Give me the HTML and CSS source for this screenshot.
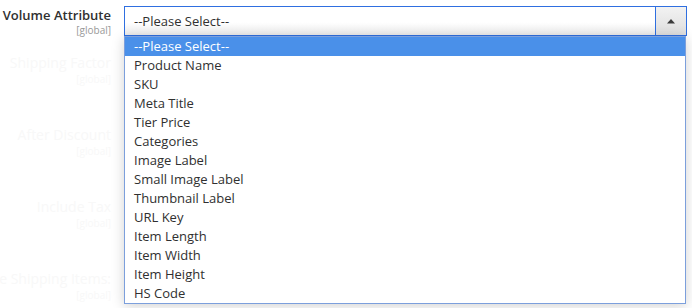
FILE: index.html
```html
<!DOCTYPE html>
<html>
<head>
<meta charset="utf-8">
<link rel="stylesheet" href="styles.css">
</head>
<body>
<div class="form">
  <div class="row first">
    <div class="label"><span class="name">Volume Attribute</span><span class="scope">[global]</span></div>
    <div class="control">
      <div class="select">
        <span class="value">--Please Select--</span>
        <span class="arrow"><svg width="8" height="6" viewBox="0 0 8 6"><path d="M0 5.5 L4 1 L8 5.5 Z" fill="#3a3a3a"/></svg></span>
      </div>
      <ul class="dropdown">
        <li class="selected">--Please Select--</li>
        <li>Product Name</li>
        <li>SKU</li>
        <li>Meta Title</li>
        <li>Tier Price</li>
        <li>Categories</li>
        <li>Image Label</li>
        <li>Small Image Label</li>
        <li>Thumbnail Label</li>
        <li>URL Key</li>
        <li>Item Length</li>
        <li>Item Width</li>
        <li>Item Height</li>
        <li>HS Code</li>
      </ul>
    </div>
  </div>
  <div class="row faint">
    <div class="label"><span class="name">Shipping Factor</span><span class="scope">[global]</span></div>
  </div>
  <div class="row faint">
    <div class="label"><span class="name">After Discount</span><span class="scope">[global]</span></div>
  </div>
  <div class="row faint">
    <div class="label"><span class="name">Include Tax</span><span class="scope">[global]</span></div>
  </div>
  <div class="row faint last">
    <div class="label"><span class="name">Free Shipping Items:</span><span class="scope">[global]</span></div>
  </div>
</div>
</body>
</html>
```

FILE: styles.css
```css
html, body {
  margin: 0;
  padding: 0;
  background: #fff;
  font-family: "Open Sans", "Liberation Sans", sans-serif;
  color: #303030;
  overflow: hidden;
}
.form {
  display: flex;
  flex-direction: column;
  padding-top: 6px;
  height: 302px;
  overflow: hidden;
}
.row {
  display: flex;
  align-items: flex-start;
}
.row.first {
  height: 47px;
}
.row.faint {
  height: 72px;
}
.row.last {
  height: 38px;
}
.label {
  width: 111px;
  flex: none;
  display: flex;
  flex-direction: column;
  align-items: flex-end;
  white-space: nowrap;
}
.name {
  font-size: 13px;
  font-weight: 600;
  line-height: 18px;
}
.scope {
  font-size: 10px;
  color: #999;
  line-height: 13px;
}
.faint .name {
  font-size: 14px;
  font-weight: 400;
  line-height: 20px;
}
.faint .name, .faint .scope {
  color: #f8f8f8;
}
.control {
  position: relative;
  margin-left: 13px;
  width: 563px;
}
.select {
  box-sizing: border-box;
  height: 30px;
  border: 1px solid #2f6fe0;
  background: linear-gradient(#fff 0%, #fff 55%, #ececec 100%);
  display: flex;
  align-items: center;
}
.value {
  flex: 1;
  font-size: 13px;
  padding-left: 9px;
  color: #303030;
}
.arrow {
  box-sizing: border-box;
  width: 31px;
  height: 100%;
  border-left: 1px solid #2f6fe0;
  background: linear-gradient(#f2f2f2, #dedede);
  display: flex;
  align-items: center;
  justify-content: center;
}
.dropdown {
  position: absolute;
  top: 30px;
  left: 0;
  width: 562px;
  box-sizing: border-box;
  margin: 0;
  padding: 0;
  list-style: none;
  background: #fff;
  border: 1px solid #7c9fdc;
  box-shadow: 0 2px 12px rgba(0, 0, 0, 0.18);
  z-index: 2;
}
.dropdown li {
  height: 19px;
  line-height: 19px;
  font-size: 13px;
  padding-left: 9px;
  color: #303030;
}
.dropdown li.selected {
  background: #4a90e9;
  color: #fff;
}
```
